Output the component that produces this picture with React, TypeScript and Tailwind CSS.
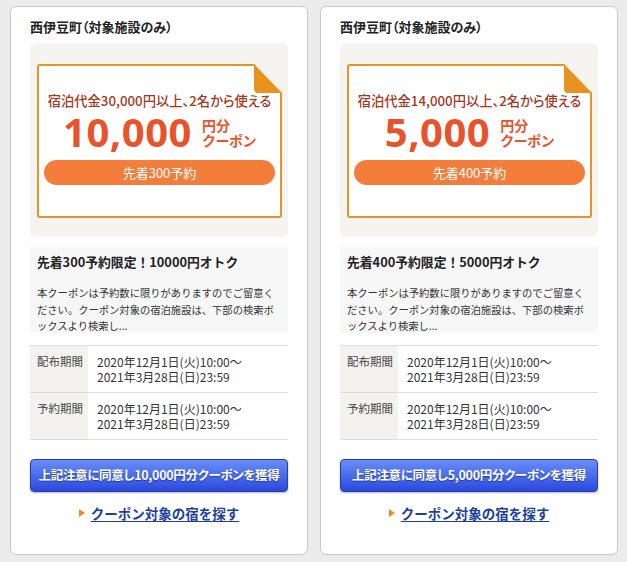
import React from "react";

type CardProps = { min: string; amount: string; count: string; plain: string };

const JP = "font-['Noto_Sans_CJK_JP','Noto_Sans',sans-serif]";

function Card({ min, amount, count, plain }: CardProps) {
  return (
    <div className="w-[298px] h-[549px] bg-white border border-[#c9c9c9] rounded-[6px] px-[19px] pt-[11px] flex flex-col shrink-0">
      <div className="text-[13px] font-bold leading-[18px] text-[#222] [font-feature-settings:'palt']">
        西伊豆町（対象施設のみ）
      </div>
      <div className="mt-[7px] bg-[#f5f4f1] rounded-[6px] h-[194px] pt-[21px] pl-[7px] pr-[6px]">
        <div className="relative h-[154px] border-2 border-[#e8922a] rounded-[3px] bg-white flex flex-col items-center px-[5px]">
          <svg className="absolute -top-[2px] -right-[2px]" width="28" height="29" viewBox="0 0 28 29">
            <polygon points="0,0 28,0 28,29" fill="#f5f4f1" />
            <polygon points="0,0 0,26 2,29 28,29" fill="#e8921f" />
          </svg>
          <div className="mt-[27px] text-[13.3px] leading-[16px] font-medium text-[#a8361b] [font-feature-settings:'palt']">
            宿泊代金{min}円以上、2名から使える
          </div>
          <div className="mt-[3px] flex items-start text-[#e9532b]">
            <span className="font-['Noto_Sans',sans-serif] font-bold text-[40px] leading-[40px] tracking-[0.5px]">
              {amount}
            </span>
            <span className="ml-[10px] mt-[6px] flex flex-col text-[14px] leading-[15px] font-bold">
              <span>円分</span>
              <span className="tracking-[-0.5px]">クーポン</span>
            </span>
          </div>
          <div className="mt-[8px] w-full h-[25px] rounded-full bg-[#f47d3b] text-white text-[13px] leading-[25px] text-center">
            先着{count}予約
          </div>
        </div>
      </div>
      <div className="mt-[10px] bg-[#f7f7f7] h-[86px] px-[7px] pt-[6px]">
        <div className="text-[12.8px] leading-[18px] font-bold text-[#222]">
          先着{count}予約限定！{plain}円オトク
        </div>
        <div className="mt-[14px] text-[10.3px] leading-[16.5px] text-[#333] whitespace-nowrap">
          本クーポンは予約数に限りがありますのでご留意く
          <br />
          ださい。クーポン対象の宿泊施設は、下部の検索ボ
          <br />
          ックスより検索し...
        </div>
      </div>
      <div className="mt-[12px] border-t border-[#dddddd]">
        {["配布期間", "予約期間"].map((label) => (
          <div key={label} className="flex h-[47px] border-b border-[#dddddd]">
            <div className="w-[58px] bg-[#f3f2ee] pl-[7px] pt-[8px] text-[11.5px] leading-[15px] text-[#444]">
              {label}
            </div>
            <div className="pl-[9px] pt-[8px] text-[12px] leading-[15px] text-[#333] [font-feature-settings:'palt']">
              2020年12月1日(火)10:00〜
              <br />
              2021年3月28日(日)23:59
            </div>
          </div>
        ))}
      </div>
      <div className="mt-[19px] h-[33px] rounded-[4px] border border-[#2a3cae] bg-gradient-to-b from-[#6a8cf8] to-[#2c47df] shadow-[0_1px_2px_rgba(0,0,0,0.3)] flex items-center justify-center text-white text-[12.5px] font-bold tracking-[-0.3px] [text-shadow:0_1px_1px_rgba(0,0,0,0.4)] [font-feature-settings:'palt']">
        上記注意に同意し{amount}円分クーポンを獲得
      </div>
      <div className="mt-[12px] flex items-center justify-center gap-[6px]">
        <svg width="6" height="8" viewBox="0 0 6 8">
          <polygon points="0,0 6,4 0,8" fill="#f08a24" />
        </svg>
        <span className="text-[13.5px] leading-[18px] font-bold text-[#1d3f9e] underline underline-offset-2">
          クーポン対象の宿を探す
        </span>
      </div>
    </div>
  );
}

export default function App() {
  return (
    <div className={`w-[627px] h-[562px] bg-[#ececec] flex gap-[12px] pl-[10px] pt-[6px] overflow-hidden ${JP}`}>
      <Card min="30,000" amount="10,000" count="300" plain="10000" />
      <Card min="14,000" amount="5,000" count="400" plain="5000" />
    </div>
  );
}
